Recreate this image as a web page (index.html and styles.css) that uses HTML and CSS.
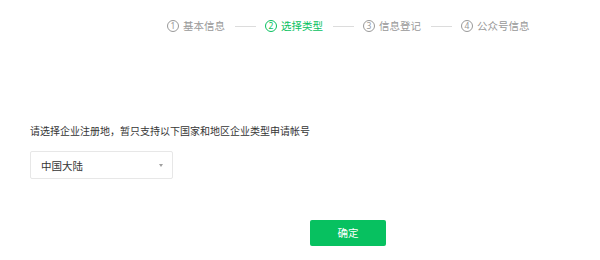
FILE: index.html
```html
<!DOCTYPE html>
<html lang="zh-CN">
<head>
<meta charset="utf-8">
<title>选择类型</title>
<link rel="stylesheet" href="styles.css">
</head>
<body>
<div class="page">
  <div class="steps">
    <div class="step"><span class="step-num">1</span><span class="step-label">基本信息</span></div>
    <span class="step-line"></span>
    <div class="step step-active"><span class="step-num">2</span><span class="step-label">选择类型</span></div>
    <span class="step-line"></span>
    <div class="step"><span class="step-num">3</span><span class="step-label">信息登记</span></div>
    <span class="step-line"></span>
    <div class="step"><span class="step-num">4</span><span class="step-label">公众号信息</span></div>
  </div>
  <div class="content">
    <p class="tips">请选择企业注册地，暂只支持以下国家和地区企业类型申请帐号</p>
    <div class="select">
      <span class="select-value">中国大陆</span>
      <span class="select-arrow"></span>
    </div>
    <div class="actions">
      <button class="btn-primary" type="button">确定</button>
    </div>
  </div>
</div>
</body>
</html>
```

FILE: styles.css
```css
html, body {
  margin: 0;
  padding: 0;
  background: #ffffff;
}

body {
  font-family: "Noto Sans CJK SC", "Noto Sans", sans-serif;
  color: #353535;
}

.page {
  width: 600px;
  height: 260px;
}

.steps {
  display: flex;
  align-items: center;
  padding: 18px 0 0 167px;
  height: 16px;
  font-size: 10.5px;
  line-height: 16px;
  color: #999999;
}

.step {
  display: flex;
  align-items: center;
}

.step-num {
  box-sizing: border-box;
  width: 12px;
  height: 12px;
  margin-right: 4px;
  border: 1px solid currentColor;
  border-radius: 50%;
  display: flex;
  align-items: center;
  justify-content: center;
  font-family: "Noto Sans", sans-serif;
  font-size: 8.5px;
  line-height: 1;
}

.step-active {
  color: #07c160;
}

.step-line {
  width: 21px;
  height: 1px;
  margin: 1px 9px 0 10px;
  background: #dcdcdc;
}

.content {
  padding-left: 30px;
}

.tips {
  margin: 89px 0 0;
  font-size: 10px;
  line-height: 16px;
  color: #353535;
}

.select {
  box-sizing: border-box;
  width: 143px;
  height: 28px;
  margin-top: 12px;
  padding: 0 9px 0 10px;
  display: flex;
  align-items: center;
  justify-content: space-between;
  border: 1px solid #e7e7e7;
  border-radius: 2px;
  font-size: 10.5px;
  color: #353535;
}

.select-arrow {
  width: 0;
  height: 0;
  border-left: 2.5px solid transparent;
  border-right: 2.5px solid transparent;
  border-top: 3px solid #a0a0a0;
  margin-top: 1px;
}

.actions {
  margin-top: 41px;
  padding-left: 280px;
}

.btn-primary {
  display: block;
  width: 76px;
  height: 26px;
  padding: 0;
  border: 0;
  border-radius: 2px;
  background: #07c160;
  color: #ffffff;
  font-family: "Noto Sans CJK SC", "Noto Sans", sans-serif;
  font-size: 10.5px;
  line-height: 26px;
  cursor: pointer;
}
```
